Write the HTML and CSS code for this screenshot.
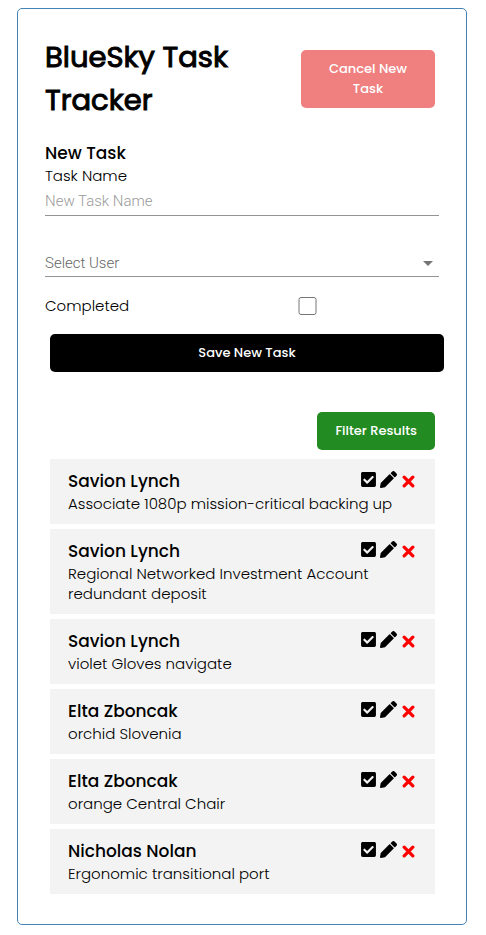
FILE: index.html
```html
<!DOCTYPE html>
<html lang="en">
<head>
<meta charset="utf-8">
<meta name="viewport" content="width=device-width, initial-scale=1">
<title>BlueSky Task Tracker</title>
<link rel="stylesheet" href="styles.css">
</head>
<body>
<svg class="sprite" aria-hidden="true">
  <symbol id="check" viewBox="0 0 448 512"><path d="M400 480H48c-26.500 0-48-21.500-48-48V80c0-26.500 21.500-48 48-48h352c26.500 0 48 21.500 48 48v352c0 26.500-21.500 48-48 48zm-204.700-98.100l184-184c6.200-6.200 6.200-16.400 0-22.600l-22.600-22.600c-6.200-6.200-16.400-6.200-22.600 0L184 302.700l-70.100-70.100c-6.200-6.200-16.400-6.200-22.600 0l-22.600 22.600c-6.200 6.200-6.200 16.400 0 22.600l104 104c6.200 6.300 16.400 6.300 22.600.1z"/></symbol>
  <symbol id="pencil" viewBox="0 0 512 512"><path d="M498 142l-46 46c-5 5-13 5-17 0L324 77c-5-5-5-12 0-17l46-46c19-19 49-19 68 0l60 60c19 19 19 49 0 68zm-214-42L22 362 0 484c-3 16 12 30 28 28l122-22 262-262c5-5 5-13 0-17L301 100c-4-5-12-5-17 0z"/></symbol>
  <symbol id="cross" viewBox="0 0 12 12"><path d="M2 2L10 10M10 2L2 10" fill="none" stroke="currentColor" stroke-width="3" stroke-linecap="round"/></symbol>
</svg>
<main class="container">
  <header class="header">
    <h1>BlueSky Task Tracker</h1>
    <button class="btn btn-cancel" type="button">Cancel New Task</button>
  </header>
  <form class="task-form">
    <h2>New Task</h2>
    <label class="label" for="name">Task Name</label>
    <input class="field" id="name" type="text" placeholder="New Task Name">
    <div class="select-wrap">
      <select class="field" id="user" aria-label="Select User"><option>Select User</option></select>
      <svg class="caret" viewBox="0 0 10 5" aria-hidden="true"><path d="M0 0h10L5 5z"/></svg>
    </div>
    <div class="completed">
      <label for="done">Completed</label>
      <input id="done" type="checkbox">
    </div>
    <button class="btn btn-save" type="button">Save New Task</button>
  </form>
  <div class="toolbar"><button class="btn btn-filter" type="button">Filter Results</button></div>
  <ul class="tasks">
    <li class="task">
      <div class="task-head"><h3>Savion Lynch</h3><div class="actions"><button type="button" aria-label="Complete"><svg class="icon-check"><use href="#check"/></svg></button><button type="button" aria-label="Edit"><svg class="icon-pencil"><use href="#pencil"/></svg></button><button type="button" aria-label="Delete"><svg class="icon-cross"><use href="#cross"/></svg></button></div></div>
      <p>Associate 1080p mission-critical backing up</p>
    </li>
    <li class="task">
      <div class="task-head"><h3>Savion Lynch</h3><div class="actions"><button type="button" aria-label="Complete"><svg class="icon-check"><use href="#check"/></svg></button><button type="button" aria-label="Edit"><svg class="icon-pencil"><use href="#pencil"/></svg></button><button type="button" aria-label="Delete"><svg class="icon-cross"><use href="#cross"/></svg></button></div></div>
      <p>Regional Networked Investment Account redundant deposit</p>
    </li>
    <li class="task">
      <div class="task-head"><h3>Savion Lynch</h3><div class="actions"><button type="button" aria-label="Complete"><svg class="icon-check"><use href="#check"/></svg></button><button type="button" aria-label="Edit"><svg class="icon-pencil"><use href="#pencil"/></svg></button><button type="button" aria-label="Delete"><svg class="icon-cross"><use href="#cross"/></svg></button></div></div>
      <p>violet Gloves navigate</p>
    </li>
    <li class="task">
      <div class="task-head"><h3>Elta Zboncak</h3><div class="actions"><button type="button" aria-label="Complete"><svg class="icon-check"><use href="#check"/></svg></button><button type="button" aria-label="Edit"><svg class="icon-pencil"><use href="#pencil"/></svg></button><button type="button" aria-label="Delete"><svg class="icon-cross"><use href="#cross"/></svg></button></div></div>
      <p>orchid Slovenia</p>
    </li>
    <li class="task">
      <div class="task-head"><h3>Elta Zboncak</h3><div class="actions"><button type="button" aria-label="Complete"><svg class="icon-check"><use href="#check"/></svg></button><button type="button" aria-label="Edit"><svg class="icon-pencil"><use href="#pencil"/></svg></button><button type="button" aria-label="Delete"><svg class="icon-cross"><use href="#cross"/></svg></button></div></div>
      <p>orange Central Chair</p>
    </li>
    <li class="task">
      <div class="task-head"><h3>Nicholas Nolan</h3><div class="actions"><button type="button" aria-label="Complete"><svg class="icon-check"><use href="#check"/></svg></button><button type="button" aria-label="Edit"><svg class="icon-pencil"><use href="#pencil"/></svg></button><button type="button" aria-label="Delete"><svg class="icon-cross"><use href="#cross"/></svg></button></div></div>
      <p>Ergonomic transitional port</p>
    </li>
  </ul>
</main>
</body>
</html>
```
FILE: styles.css
```css
* { box-sizing: border-box; }
body {
  margin: 0;
  padding: 8px 19px 8px 17px;
  background: #fff;
  color: #000;
  font-family: Poppins, Inter, sans-serif;
  font-size: 15px;
  font-weight: 300;
}
h1, h2, h3, p, ul { margin: 0; padding: 0; }
.sprite { display: none; }
.container {
  border: 1px solid steelblue;
  border-radius: 5px;
  padding: 27px 27px 30px;
}
.header {
  display: flex;
  justify-content: space-between;
  align-items: center;
  padding-right: 4px;
}
h1 {
  max-width: 200px;
  font-size: 29px;
  font-weight: 400;
  line-height: 43px;
  -webkit-text-stroke: 1px currentColor;
}
h2, h3 { font-size: 17px; font-weight: 500; }
.btn {
  border: 0;
  border-radius: 5px;
  padding: 9px 18px;
  color: #fff;
  font-family: inherit;
  font-size: 13px;
  font-weight: 500;
  line-height: 20px;
}
.btn-cancel { width: 134px; background: lightcoral; }
.btn-save { margin: 0 -5px 0 5px; background: #000; }
.btn-filter { background: forestgreen; }
.task-form {
  display: flex;
  flex-direction: column;
  margin-top: 18px;
}
h2 { line-height: 26px; }
.label { line-height: 20px; }
.field {
  appearance: none;
  width: 100%;
  height: 30px;
  border: 0;
  border-bottom: 1px solid #949494;
  border-radius: 0;
  padding: 0;
  background: transparent;
  color: #666;
  font-family: Roboto, sans-serif;
  font-size: 15px;
  font-weight: 300;
}
.field::placeholder { color: #999; }
.select-wrap { position: relative; margin-top: 31px; }
.select-wrap .field { display: block; padding-top: 2px; }
.caret {
  position: absolute;
  right: 6px;
  top: 14px;
  width: 10px;
  height: 5px;
  fill: #757575;
}
.completed {
  display: grid;
  grid-template-columns: 253px 1fr;
  align-items: center;
  height: 57px;
}
.completed input { width: 19px; height: 18px; margin: 0; }
.toolbar {
  display: flex;
  justify-content: flex-end;
  padding: 40px 4px 9px 0;
}
.tasks {
  display: grid;
  gap: 5px;
  padding: 0 4px 0 5px;
  list-style: none;
}
.task { padding: 10px 20px 10px 18px; background: #f3f3f3; }
.task-head {
  display: flex;
  justify-content: space-between;
  align-items: flex-start;
}
h3 { line-height: 25px; }
.task p { line-height: 20px; }
.actions { display: flex; align-items: center; gap: 4px; height: 20px; }
.actions button {
  display: flex;
  border: 0;
  padding: 0;
  background: none;
  color: #000;
}
.actions svg { display: block; fill: currentColor; }
.icon-check { width: 15px; height: 17px; }
.icon-pencil { width: 17px; height: 17px; }
.icon-cross { width: 13px; height: 13px; margin: 4px 0 0 1px; color: red; }
```
